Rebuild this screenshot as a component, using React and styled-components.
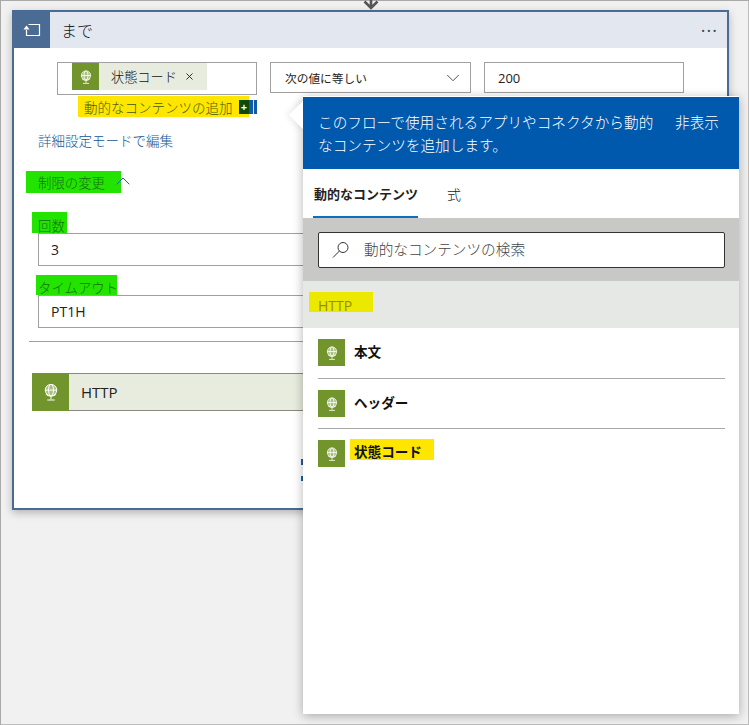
import React from 'react'
import styled, { createGlobalStyle } from 'styled-components'
import { ChevronDown, ChevronUp, X } from 'lucide-react'

const GlobalStyle = createGlobalStyle`
  html, body { margin: 0; padding: 0; background: #f1f1f1; }
  * { box-sizing: border-box; }
  body {
    font-family: "Open Sans", "Noto Sans CJK JP", sans-serif;
    color: #222;
  }
`

const GlobeIcon = ({ size = 16 }) => (
  <svg width={size} height={size} viewBox="0 0 16 16" fill="none" stroke="#fff" strokeWidth="0.8">
    <circle cx="8" cy="6.5" r="4.6" fill="rgba(255,255,255,0.4)" />
    <ellipse cx="8" cy="6.5" rx="2" ry="4.6" />
    <path d="M3.4 6.5h9.2M3.8 9.8c2.4 2 6 2 8.4 0M8 11.5V14M5 14.4h6" />
  </svg>
)

const UntilIcon = () => (
  <svg width="18" height="14" viewBox="0 0 18 14" fill="none" stroke="#fff" strokeWidth="1.2">
    <path d="M5.5 1.5h11v11H3.5V7" />
    <path d="M3.5 2.5L0.5 6.5h6z" fill="#fff" stroke="none" />
  </svg>
)

const LensIcon = () => (
  <svg width="18" height="18" viewBox="0 0 18 18" fill="none" stroke="#333" strokeWidth="1">
    <circle cx="11" cy="6.5" r="5" />
    <path d="M7.4 10L1 16.5" />
  </svg>
)

const App = () => {
  const fields = ['本文', 'ヘッダー', '状態コード']

  return (
    <Page>
      <GlobalStyle />
      <Connector>
        <svg width="16" height="10" viewBox="0 0 16 10" fill="none" stroke="#555" strokeWidth="2.6">
          <path d="M8 0v8M1.5 1.5L8 8l6.5-6.5" />
        </svg>
      </Connector>
      <Card>
        <CardHeader>
          <HeaderIcon><UntilIcon /></HeaderIcon>
          <CardTitle>まで</CardTitle>
          <MoreDots>···</MoreDots>
        </CardHeader>

        <ConditionRow>
          <TokenInput>
            <Token>
              <IconTile><GlobeIcon /></IconTile>
              <TokenLabel>状態コード</TokenLabel>
              <X size={11} strokeWidth={2} color="#222" />
            </Token>
          </TokenInput>
          <SelectBox>
            次の値に等しい
            <ChevronDown size={22} strokeWidth={1} color="#444" />
          </SelectBox>
          <ValueInput>200</ValueInput>
        </ConditionRow>

        <AddRow>
          <AddMarker>
            動的なコンテンツの追加
            <PlusBox>+</PlusBox>
          </AddMarker>
          <BlueTab />
        </AddRow>

        <EditLink>詳細設定モードで編集</EditLink>

        <LimitRow>
          <GreenMark>制限の変更</GreenMark>
          <LimitChevron><ChevronUp size={24} strokeWidth={1} color="#1e5f9a" /></LimitChevron>
        </LimitRow>

        <CountLabel>回数</CountLabel>
        <WideInput>3</WideInput>
        <TimeoutLabel>タイムアウト</TimeoutLabel>
        <WideInput>PT1H</WideInput>
        <Divider />

        <ActionBar>
          <ActionIcon><GlobeIcon size={20} /></ActionIcon>
          <ActionName>HTTP</ActionName>
        </ActionBar>

        <AddStepMark>
          <svg width="20" height="22" viewBox="0 0 20 22" fill="#1e5f9a">
            <rect x="0" y="0" width="2" height="6" />
            <rect x="0" y="17" width="2" height="5" />
          </svg>
        </AddStepMark>
      </Card>

      <Flyout>
        <Beak />
        <FlyoutHeader>
          <FlyoutText>このフローで使用されるアプリやコネクタから動的なコンテンツを追加します。</FlyoutText>
          <HideLink>非表示</HideLink>
        </FlyoutHeader>
        <Tabs>
          <Tab $active>動的なコンテンツ</Tab>
          <Tab>式</Tab>
        </Tabs>
        <SearchArea>
          <SearchBox>
            <LensIcon />
            <SearchText>動的なコンテンツの検索</SearchText>
          </SearchBox>
        </SearchArea>
        <GroupHeader>
          <GroupMark>HTTP</GroupMark>
        </GroupHeader>
        <FieldList>
          {fields.map((name) => (
            <FieldRow key={name}>
              <IconTile><GlobeIcon /></IconTile>
              <FieldName $marked={name === '状態コード'}>{name}</FieldName>
            </FieldRow>
          ))}
        </FieldList>
      </Flyout>
    </Page>
  )
}

export default App

const Page = styled.div`
  position: relative;
  width: 749px;
  height: 725px;
  background: #f1f1f1;
  overflow: hidden;
  box-shadow: inset 1px 1px 0 #a9a9a9, inset -1px -1px 0 #bdbdbd;
`

const Connector = styled.div`
  height: 10px;
  width: 729px;
  padding-left: 12px;
  display: flex;
  justify-content: center;
  align-items: flex-end;
`

const Card = styled.div`
  margin-left: 12px;
  width: 717px;
  height: 500px;
  background: #fff;
  border: 2px solid #4a6c94;
  box-shadow: 0 3px 8px rgba(0, 0, 0, 0.25);
`

const CardHeader = styled.div`
  height: 36px;
  display: flex;
  align-items: center;
  background: #e3e8f0;
`

const HeaderIcon = styled.div`
  width: 36px;
  height: 36px;
  background: #4a6c94;
  display: flex;
  align-items: center;
  justify-content: center;
`

const CardTitle = styled.div`
  margin-left: 11px;
  font-size: 16px;
  font-weight: 300;
  color: #111;
  flex: 1;
`

const MoreDots = styled.div`
  margin-right: 9px;
  font-size: 18px;
  letter-spacing: 1px;
  color: #444;
`

const ConditionRow = styled.div`
  display: flex;
  align-items: flex-start;
  margin: 14px 0 0 43px;
`

const TokenInput = styled.div`
  width: 200px;
  height: 33px;
  padding: 0 14px;
  border: 1px solid #a0a0a0;
`

const Token = styled.div`
  display: flex;
  align-items: center;
  width: 135px;
  height: 27px;
  background: #e8ecdf;
`

const IconTile = styled.div`
  flex: none;
  width: 27px;
  height: 27px;
  background: #71952c;
  display: flex;
  align-items: center;
  justify-content: center;
`

const TokenLabel = styled.span`
  margin: 0 7px 0 12px;
  font-size: 13.2px;
  font-weight: 300;
  color: #111;
`

const SelectBox = styled.div`
  width: 201px;
  height: 31px;
  margin-left: 13px;
  padding: 0 6px 0 14px;
  display: flex;
  align-items: center;
  justify-content: space-between;
  border: 1px solid #a0a0a0;
  font-size: 11.7px;
`

const ValueInput = styled.div`
  width: 200px;
  height: 31px;
  margin-left: 13px;
  padding: 0 13px;
  display: flex;
  align-items: center;
  border: 1px solid #a0a0a0;
  font-size: 13px;
`

const AddRow = styled.div`
  display: flex;
  align-items: center;
  height: 21px;
  margin: 1px 0 0 64px;
`

const AddMarker = styled.div`
  width: 171px;
  height: 21px;
  padding-left: 6px;
  display: flex;
  align-items: center;
  justify-content: space-between;
  background: #ffe600;
  color: #3f5c00;
  font-size: 13.5px;
  font-weight: 300;
`

const PlusBox = styled.span`
  width: 10px;
  height: 14px;
  background: #0a4a0a;
  color: #fff;
  font-size: 11px;
  font-weight: 700;
  line-height: 14px;
  text-align: center;
`

const BlueTab = styled.span`
  width: 8px;
  height: 14px;
  background: linear-gradient(90deg, #0f5aa8 0 4px, #d7e4f2 4px 5px, #0f5aa8 5px);
`

const EditLink = styled.div`
  margin: 14px 0 0 24px;
  height: 20px;
  color: #0f5596;
  font-size: 13.5px;
  font-weight: 300;
  line-height: 20px;
`

const LimitRow = styled.div`
  display: flex;
  align-items: center;
  height: 22px;
  margin: 20px 0 0 12px;
`

const GreenMark = styled.span`
  display: inline-flex;
  align-items: center;
  width: 95px;
  height: 22px;
  padding-left: 12px;
  background: #22e400;
  color: #14700c;
  font-size: 13.4px;
  font-weight: 300;
  white-space: nowrap;
`

const LimitChevron = styled.span`
  display: flex;
  margin: -3px 0 0 -10px;
`

const CountLabel = styled(GreenMark)`
  display: flex;
  width: 35px;
  height: 21px;
  margin: 19px 0 0 18px;
  padding: 4px 0 0 6px;
`

const TimeoutLabel = styled(GreenMark)`
  display: flex;
  width: 81px;
  height: 20px;
  margin: 9px 0 0 22px;
  padding: 4px 0 0 2px;
`

const WideInput = styled.div`
  width: 650px;
  height: 33px;
  margin-left: 24px;
  padding: 0 12px;
  display: flex;
  align-items: center;
  border: 1px solid #a0a0a0;
  font-size: 14px;
`

const Divider = styled.div`
  height: 1px;
  margin: 13px 30px 0 15px;
  background: #a0a0a0;
`

const ActionBar = styled.div`
  display: flex;
  align-items: center;
  height: 38px;
  margin: 31px 30px 0 18px;
  background: #e8ecdf;
  border-top: 1px solid #8a8a80;
  border-bottom: 1px solid #8a8a80;
`

const ActionIcon = styled.div`
  width: 37px;
  height: 38px;
  background: #71952c;
  display: flex;
  align-items: center;
  justify-content: center;
`

const ActionName = styled.div`
  margin-left: 12px;
  font-size: 15px;
`

const AddStepMark = styled.div`
  display: flex;
  margin: 48px 0 0 287px;
`

const Flyout = styled.div`
  position: absolute;
  top: 96px;
  left: 303px;
  width: 436px;
  height: 618px;
  background: #fff;
  box-shadow: 0 2px 10px rgba(0, 0, 0, 0.3);
`

const Beak = styled.div`
  position: absolute;
  top: 9px;
  left: -10px;
  width: 20px;
  height: 20px;
  background: #fff;
  transform: rotate(45deg);
  box-shadow: -2px 2px 6px rgba(0, 0, 0, 0.08);
`

const FlyoutHeader = styled.div`
  position: relative;
  height: 72px;
  margin-top: 1px;
  padding: 14px 20px 0 15px;
  display: flex;
  background: #0059ad;
  color: #fff;
  font-size: 14.65px;
  font-weight: 300;
  line-height: 23px;
`

const FlyoutText = styled.div`
  width: 340px;
`

const HideLink = styled.div`
  margin-left: 17px;
  white-space: nowrap;
`

const Tabs = styled.div`
  height: 49px;
  padding-left: 10px;
  display: flex;
  gap: 28px;
`

const Tab = styled.div`
  display: flex;
  align-items: center;
  padding: 2px 0 0 1px;
  width: ${(p) => (p.$active ? '105px' : 'auto')};
  font-size: ${(p) => (p.$active ? '13px' : '14px')};
  font-weight: ${(p) => (p.$active ? 700 : 300)};
  white-space: nowrap;
  border-bottom: ${(p) => (p.$active ? '2px solid #106ebe' : '2px solid transparent')};
`

const SearchArea = styled.div`
  height: 63px;
  padding: 14px 14px 0 15px;
  background: #c8c9c7;
`

const SearchBox = styled.div`
  height: 36px;
  padding-left: 13px;
  display: flex;
  align-items: center;
  gap: 14px;
  background: #fff;
  border: 1px solid #333;
  border-radius: 2px;
`

const SearchText = styled.span`
  padding-bottom: 3px;
  color: #444;
  font-size: 14.65px;
  font-weight: 300;
`

const GroupHeader = styled.div`
  height: 47px;
  padding: 11px 0 0 6px;
  background: #e6e8e5;
`

const GroupMark = styled.div`
  width: 64px;
  height: 20px;
  padding: 5px 0 0 9px;
  background: #ece800;
  color: #8f8f00;
  font-size: 14px;
  line-height: 17px;
`

const FieldList = styled.div`
  padding: 0 14px 0 15px;
`

const FieldRow = styled.div`
  display: flex;
  align-items: center;
  padding: 11px 0;
  border-bottom: 1px solid #a8a8a8;
  &:first-child { padding-bottom: 12px; }
  &:last-child { border-bottom: none; }
`

const FieldName = styled.span`
  margin: ${(p) => (p.$marked ? '-1px 0 0 5px' : '-2px 0 0 9px')};
  padding: ${(p) => (p.$marked ? '3px 12px 0 4px' : '0')};
  height: ${(p) => (p.$marked ? '21px' : 'auto')};
  align-self: ${(p) => (p.$marked ? 'flex-start' : 'center')};
  background: ${(p) => (p.$marked ? '#ffe600' : 'transparent')};
  font-size: 13.6px;
  font-weight: 700;
  line-height: 20px;
  color: #111;
`
